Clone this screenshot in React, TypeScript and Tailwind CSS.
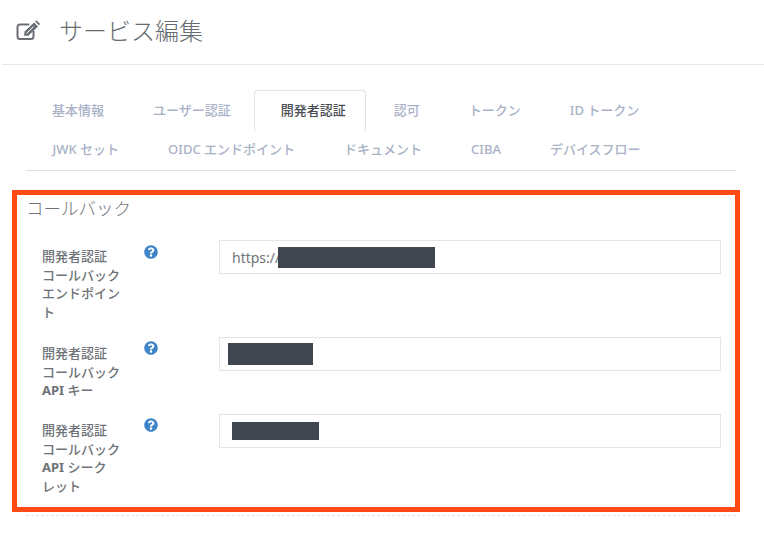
import React from "react";
import {FaQuestionCircle} from "react-icons/fa";

const font = "[font-family:'Noto_Sans','Noto_Sans_CJK_JP',sans-serif]";

const rowOne = ["基本情報", "ユーザー認証", "開発者認証", "認可", "トークン", "ID トークン"];
const rowTwo = ["JWK セット", "OIDC エンドポイント", "ドキュメント", "CIBA", "デバイスフロー"];

const EditIcon: React.FC = () => (
    <svg viewBox="0 0 24 20" className="ml-[14px] mt-[20px] w-[24px] h-[20px] text-[#6b6f75]" fill="currentColor">
        <path
            d="M12.5 4.5H4a2.5 2.5 0 0 0-2.5 2.5v9.5A2.5 2.5 0 0 0 4 19h11a2.5 2.5 0 0 0 2.5-2.5v-5"
            fill="none"
            stroke="currentColor"
            strokeWidth="2"
            strokeLinecap="round"
        />
        <path d="M8 15.8 8.6 11.6 18 2.6 22 6.6 12.4 15.8Z"/>
        <path d="M19 1.6 20.6.4 24 3.8 23 5.6Z"/>
        <path d="M10.6 13.4 17.4 6.8" stroke="#fff" strokeWidth="1"/>
    </svg>
);

const Tab: React.FC<{ label: string, active?: boolean }> = ({label, active = false}) => {
    if (active) {
        return (
            <div className="h-[41px] w-[112px] ml-[-1.5px] mr-[3.5px] pl-[26px] flex items-center border border-b-0 border-[#dfe3e8] rounded-t-[4px] bg-white text-[#4a4d52] text-[13px] font-medium whitespace-nowrap">
                {label}
            </div>
        );
    }
    return (
        <div className="h-[41px] px-[24.5px] flex items-center text-[#a9b2c6] text-[13px] font-medium whitespace-nowrap">
            {label}
        </div>
    );
};

interface FieldProps {
    lines: React.ReactNode[];
    barClass: string;
    prefix?: string;
    rowClass: string;
    iconClass?: string;
}

const Field: React.FC<FieldProps> = ({lines, barClass, prefix, rowClass, iconClass = "pt-[4px]"}) => (
    <div className={`flex ${rowClass}`}>
        <div className="w-[102px] pt-[7px] text-[13px] leading-[18.6px] font-medium text-[#6f7378]">
            {lines.map((line, i) => (
                <div key={i} className="whitespace-nowrap">{line}</div>
            ))}
        </div>
        <div className={`w-[75px] ${iconClass}`}>
            <FaQuestionCircle className="text-[#3d85c6] w-[14px] h-[14px]"/>
        </div>
        <div className="w-[502px] h-[34px] border border-[#e5e5e5] bg-white flex items-center text-[14px] text-[#6f7378]">
            {prefix && <span className="pl-[12px]">{prefix}</span>}
            <div className={`bg-[#40464f] ${barClass}`}/>
        </div>
    </div>
);

const App: React.FC = () => {
    return (
        <div className={`w-[764px] h-[538px] overflow-hidden bg-white ${font}`}>
            <div className="h-[65px] ml-[2px] flex items-start border-b border-[#e4e7ec]">
                <EditIcon/>
                <h1 className="ml-[19px] mt-[14px] text-[24px] leading-[34px] text-[#666b70] font-light">サービス編集</h1>
            </div>
            <div className="ml-[26px] mt-[25px] w-[710px] h-[81px] border-b border-[#dcdfe3]">
                <div className="flex h-[41px] pl-[1.5px]">
                    {rowOne.map((label) => (
                        <Tab key={label} label={label} active={label === "開発者認証"}/>
                    ))}
                </div>
                <div className="flex h-[39px] items-center pl-[2px] mt-[-1px]">
                    {rowTwo.map((label) => (
                        <Tab key={label} label={label}/>
                    ))}
                </div>
            </div>
            <div className="ml-[12px] mt-[19px] w-[728px] h-[322px] border-[5px] border-[#ff4a14] pl-[25px]">
                <h2 className="ml-[-16px] mt-[1px] text-[17.5px] leading-[24px] text-[#6f7378] font-light whitespace-nowrap">コールバック</h2>
                <Field
                    lines={["開発者認証", "コールバック", "エンドポイン", "ト"]}
                    prefix="https://"
                    barClass="w-[157px] h-[21px] ml-[-2px]"
                    rowClass="mt-[20px] h-[97px]"
                    iconClass="pt-[5px]"
                />
                <Field
                    lines={["開発者認証", "コールバック", <><span className="font-bold">API</span> キー</>]}
                    barClass="w-[85px] h-[22px] ml-[8px]"
                    rowClass="h-[77px]"
                />
                <Field
                    lines={["開発者認証", "コールバック", <><span className="font-bold">API</span> シーク</>, "レット"]}
                    barClass="w-[87px] h-[18px] ml-[12px]"
                    rowClass="h-[80px]"
                />
            </div>
            <div className="ml-[26px] mt-[3px] w-[710px] border-t border-dashed border-[#e5e5e5]"/>
        </div>
    );
};

export default App;
